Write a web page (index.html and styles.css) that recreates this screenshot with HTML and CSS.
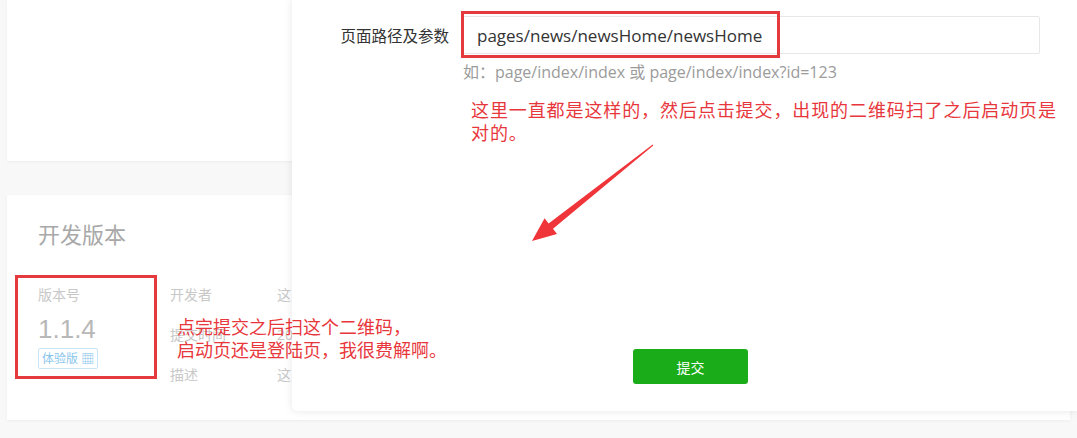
FILE: index.html
```html
<!DOCTYPE html>
<html lang="zh-CN">
<head>
    <meta charset="UTF-8">
    <title>版本管理</title>
    <link rel="stylesheet" href="styles.css">
</head>
<body>

<div class="page">
    <div class="card card-top"></div>

    <div class="card card-dev">
        <h2 class="card-title">开发版本</h2>
        <div class="version-row">
            <div class="version-main">
                <div class="version-label">版本号</div>
                <div class="version-num">1.1.4</div>
                <span class="version-tag">体验版 <span class="qr">&#9638;</span></span>
            </div>
            <div class="version-info">
                <div class="info-label">开发者</div>
                <div class="info-value">这</div>
                <div class="info-label">提交时间</div>
                <div class="info-value">20</div>
                <div class="info-label">描述</div>
                <div class="info-value">这</div>
            </div>
        </div>
    </div>
</div>

<div class="dialog">
    <form class="dialog-form">
        <div class="form-row">
            <label for="path">页面路径及参数</label>
            <input type="text" id="path" value="pages/news/newsHome/newsHome">
        </div>
        <p class="form-hint">如：page/index/index 或 page/index/index?id=123</p>
        <button type="button" class="btn-submit">提交</button>
    </form>
</div>

<!-- 标注 -->
<div class="mark-box mark-input"></div>
<div class="mark-box mark-version"></div>
<p class="mark-text mark-top">这里一直都是这样的，然后点击提交，出现的二维码扫了之后启动页是<br>对的。</p>
<p class="mark-text mark-bottom">点完提交之后扫这个二维码，<br>启动页还是登陆页，我很费解啊。</p>
<svg class="mark-arrow" width="145" height="115" viewBox="0 0 145 115">
    <polygon points="12,106 37,99 33,93.8 133.3,10.4 132.7,9.6 28.6,88.4 24.6,83.3" fill="#f0353a"/>
</svg>

</body>
</html>
```

FILE: styles.css
```css
body {
    margin: 0;
    background-color: #f8f8f8;
    font-family: "Open Sans", "Noto Sans CJK SC", sans-serif;
    color: #333;
    width: 1077px;
    height: 438px;
    overflow: hidden;
    position: relative;
}
.page {
    padding: 0 7px;
}
.card {
    background-color: #fff;
    box-shadow: 0 1px 3px rgba(0, 0, 0, 0.05);
}
.card-top {
    height: 161px;
}
.card-dev {
    margin-top: 34px;
    height: 225px;
    padding-left: 31px;
    box-sizing: border-box;
    padding-top: 22px;
}
.card-title {
    margin: 0;
    font-size: 22px;
    font-weight: normal;
    color: #a8a8a8;
    line-height: 34px;
}
.version-row {
    display: flex;
    margin-top: 34px;
}
.version-main {
    width: 132px;
}
.version-label {
    font-size: 14px;
    color: #c8c8c8;
    line-height: 20px;
}
.version-num {
    font-size: 26px;
    color: #b8b8b8;
    line-height: 34px;
    margin-top: 7px;
    font-family: "Liberation Sans", sans-serif;
}
.version-tag {
    display: inline-block;
    font-size: 12px;
    color: #8ac6ec;
    border: 1px solid #c8e4f6;
    border-radius: 2px;
    padding: 0 3px;
    line-height: 18px;
    margin-top: 2px;
}
.qr {
    font-size: 13px;
}
.version-info {
    display: grid;
    grid-template-columns: 107px 40px;
    row-gap: 20px;
    font-size: 14px;
    color: #c8c8c8;
    line-height: 20px;
}
.dialog {
    position: absolute;
    left: 292px;
    top: 0;
    right: 0;
    height: 411px;
    background-color: #fff;
    border-bottom-left-radius: 5px;
    box-shadow: 0 0 8px rgba(0, 0, 0, 0.1);
}
.dialog-form {
    padding-top: 16px;
}
.form-row {
    display: flex;
    align-items: center;
}
.form-row label {
    width: 157px;
    text-align: right;
    font-size: 15.5px;
    color: #333;
    margin-right: 13px;
    font-family: "Noto Sans CJK SC", sans-serif;
}
.form-row input {
    width: 578px;
    height: 38px;
    box-sizing: border-box;
    border: 1px solid #e7e7e7;
    border-radius: 2px;
    padding: 0 14px;
    font-family: "Open Sans", "Noto Sans CJK SC", sans-serif;
    font-size: 17px;
    color: #333;
    outline: none;
}
.form-hint {
    margin: 7px 0 0 171px;
    font-size: 16px;
    color: #9b9b9b;
    line-height: 22px;
}
.btn-submit {
    display: block;
    margin: 266px 0 0 341px;
    width: 115px;
    height: 35px;
    background-color: #1aad19;
    color: #fff;
    border: none;
    border-radius: 3px;
    font-size: 14px;
    font-family: "Noto Sans CJK SC", sans-serif;
}
.mark-box {
    position: absolute;
    border: 3px solid #e53a3d;
    box-sizing: border-box;
}
.mark-input {
    left: 461px;
    top: 11px;
    width: 319px;
    height: 47px;
}
.mark-version {
    left: 15px;
    top: 275px;
    width: 142px;
    height: 104px;
}
.mark-text {
    position: absolute;
    margin: 0;
    font-family: "Noto Sans CJK SC", sans-serif;
    font-size: 18px;
    line-height: 23px;
    color: #e8373c;
}
.mark-top {
    left: 471px;
    top: 98px;
    letter-spacing: 0.9px;
}
.mark-bottom {
    left: 177px;
    top: 315px;
}
.mark-arrow {
    position: absolute;
    left: 520px;
    top: 135px;
}
```
